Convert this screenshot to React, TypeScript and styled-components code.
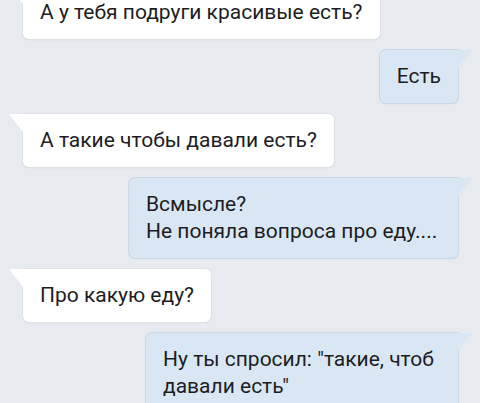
import React from "react";
import styled, { createGlobalStyle, css } from "styled-components";

const GlobalStyle = createGlobalStyle`
    html, body {
        margin: 0;
        padding: 0;
        height: 100%;
        overflow: hidden;
        background: #e7ebf0;
    }
    body {
        font-family: Roboto, "Noto Sans", "Liberation Sans", sans-serif;
    }
`;

type Side = "in" | "out";

const messages: { side: Side; text: string[]; width?: number }[] = [
    { side: "in", text: ["А у тебя подруги красивые есть?"] },
    { side: "out", text: ["Есть"] },
    { side: "in", text: ["А такие чтобы давали есть?"] },
    { side: "out", text: ["Всмысле?", "Не поняла вопроса про еду...."], width: 329 },
    { side: "in", text: ["Про какую еду?"] },
    { side: "out", text: ["Ну ты спросил: \"такие, чтоб", "давали есть\""], width: 312 },
];

const Chat = styled.div`
    display: flex;
    flex-direction: column;
    gap: 11px;
    margin-top: -14px;
    padding: 0 22px 0 23px;
`;

const Row = styled.div<{ $side: Side }>`
    display: flex;
    justify-content: ${(p) => (p.$side === "out" ? "flex-end" : "flex-start")};
`;

const Bubble = styled.div<{ $side: Side; $width?: number }>`
    position: relative;
    box-sizing: border-box;
    padding: 13px 17px;
    border-radius: 6px;
    font-size: 21px;
    line-height: 27px;
    color: #1d1d1f;
    white-space: nowrap;
    ${(p) => p.$width && `width: ${p.$width}px;`}

    &::before {
        content: "";
        position: absolute;
        top: 0;
        width: 14px;
        height: 18px;
    }

    ${(p) =>
        p.$side === "out"
            ? css`
                  background: #d9e7f5;
                  box-shadow: 0 0 0 1px #c9d7e6, 0 1px 1px rgba(80, 100, 130, 0.25);
                  border-top-right-radius: 0;
                  &::before {
                      left: 100%;
                      background: #d9e7f5;
                      clip-path: polygon(0 0, 100% 0, 0 100%);
                  }
              `
            : css`
                  background: #ffffff;
                  box-shadow: 0 0 0 1px #dde2e8, 0 1px 1px rgba(80, 100, 130, 0.3);
                  border-top-left-radius: 0;
                  &::before {
                      right: 100%;
                      background: #ffffff;
                      clip-path: polygon(0 0, 100% 0, 100% 100%);
                  }
              `}
`;

export default function App() {
    return (
        <>
            <GlobalStyle />
            <Chat>
                {messages.map((m, i) => (
                    <Row key={i} $side={m.side}>
                        <Bubble $side={m.side} $width={m.width}>
                            {m.text.map((line, j) => (
                                <div key={j}>{line}</div>
                            ))}
                        </Bubble>
                    </Row>
                ))}
            </Chat>
        </>
    );
}
